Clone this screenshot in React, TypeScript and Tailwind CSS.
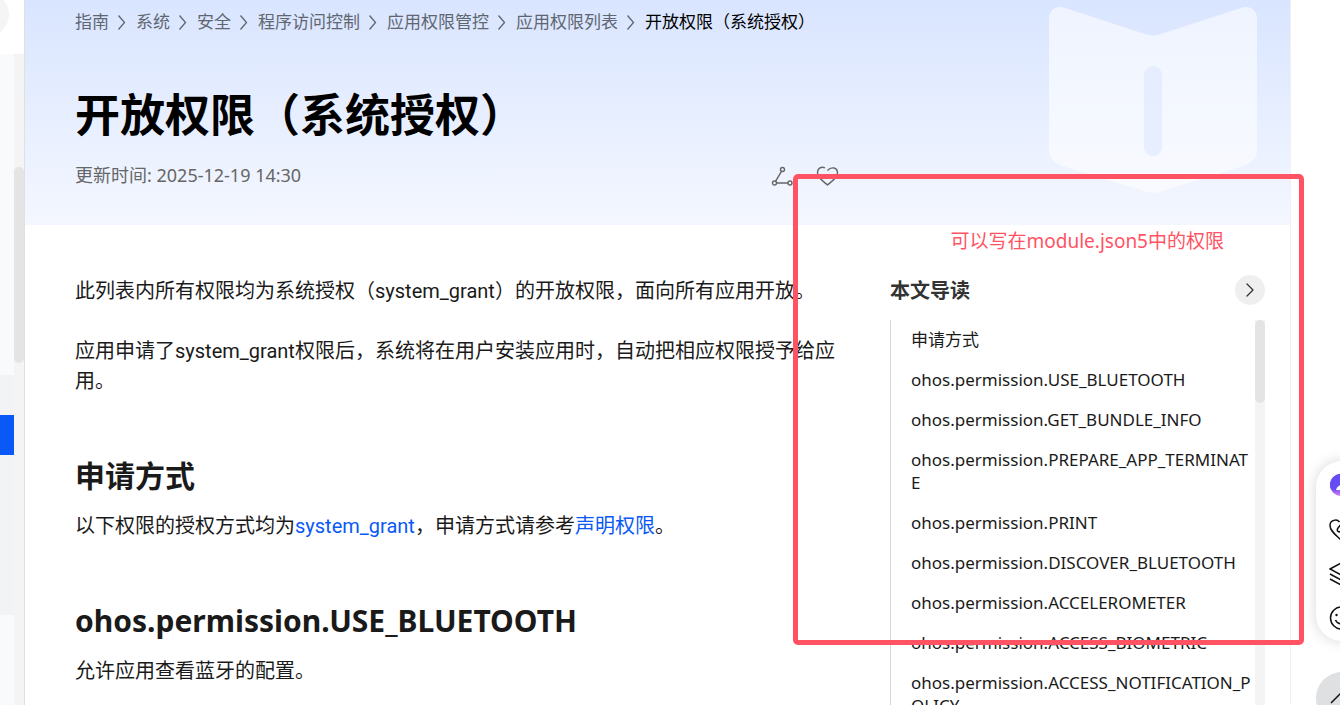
import { ChevronRight } from "lucide-react";

type Crumb = {
  label: string;
  current?: boolean;
};

const crumbs: Crumb[] = [
  { label: "指南" },
  { label: "系统" },
  { label: "安全" },
  { label: "程序访问控制" },
  { label: "应用权限管控" },
  { label: "应用权限列表" },
  { label: "开放权限（系统授权）", current: true },
];

const tocItems = [
  "申请方式",
  "ohos.permission.USE_BLUETOOTH",
  "ohos.permission.GET_BUNDLE_INFO",
  "ohos.permission.PREPARE_APP_TERMINATE",
  "ohos.permission.PRINT",
  "ohos.permission.DISCOVER_BLUETOOTH",
  "ohos.permission.ACCELEROMETER",
  "ohos.permission.ACCESS_BIOMETRIC",
  "ohos.permission.ACCESS_NOTIFICATION_POLICY",
];

const CrumbArrow = () => (
  <svg className="h-4 w-[27px] shrink-0" viewBox="0 0 27 16" fill="none" aria-hidden="true">
    <path d="M9.500 1.500l6 7-6 7" stroke="#5f6672" strokeWidth="1.3" />
  </svg>
);

const BookArt = () => (
  <svg
    className="absolute top-[7px] right-[33px] h-[186px] w-[208px]"
    viewBox="0 0 208 186"
    aria-hidden="true"
  >
    <path
      d="M0 11C0 3 8-2 16 1l80 26q8 3 16 0l80-26c8-3 16 2 16 10v133c0 7-6 12-13 15l-82 25q-9 4-18 0l-82-25C6 156 0 151 0 144Z"
      fill="#fff"
      fillOpacity="0.56"
    />
    <rect x="95" y="59" width="18" height="90" rx="9" fill="#dfe8ff" fillOpacity="0.65" />
  </svg>
);

const ShareIcon = () => (
  <svg className="size-6" viewBox="0 0 24 24" fill="none" stroke="#666" strokeWidth="1.4">
    <circle cx="11.5" cy="4.500" r="2" />
    <circle cx="3.500" cy="18" r="2" />
    <circle cx="19" cy="18" r="2" />
    <path d="M10.500 6.300l-6 10M5.500 18H17" />
  </svg>
);

const HeartIcon = () => (
  <svg className="size-6" viewBox="0 0 24 24" fill="none" stroke="#666" strokeWidth="1.4">
    <path d="M9 2.800C5.500 1.200 1.500 3 1.500 7.800c0 4.500 4.500 7.500 10 12.200 5.500-4.700 10-7.700 10-12.200 0-5.200-6-6.800-10-2.300" />
  </svg>
);

const Sidebar = () => (
  <aside className="relative flex w-[25px] shrink-0 flex-col overflow-hidden border-r border-[#e0e0e0] bg-white">
    <div className="h-[54px] shrink-0">
      <div className="absolute -top-2 -left-9 size-[45px] rounded-full bg-[#f5f5f5]" />
    </div>
    <div className="flex flex-1">
      <div className="flex w-[14px] flex-col bg-[#f8fafc]">
        <div className="mt-[321px] h-[240px] bg-[#f1f3f5] pt-10">
          <a href="#current" aria-label="应用权限列表" className="block h-10 bg-[#0a59f7]" />
        </div>
      </div>
      <div className="flex-1 bg-[#f4f4f4] pt-[113px]">
        <div className="h-[196px] rounded-full bg-[#e4e4e4]" />
      </div>
    </div>
  </aside>
);

const PageHeader = () => (
  <header className="relative h-[225px] bg-linear-to-b from-[#d9e5ff] to-[#f4f7ff] pr-[25px] pl-[50px]">
    <BookArt />
    <nav aria-label="breadcrumb" className="flex items-center pt-[10px] text-[17px] leading-6">
      {crumbs.map((crumb) =>
        crumb.current ? (
          <span key={crumb.label} className="whitespace-nowrap text-black">
            {crumb.label}
          </span>
        ) : (
          <span key={crumb.label} className="flex items-center">
            <a href="#crumb" className="whitespace-nowrap text-[#5f6672]">
              {crumb.label}
            </a>
            <CrumbArrow />
          </span>
        )
      )}
    </nav>
    <h1 className="mt-[51px] text-[45px] leading-[60px] font-bold text-black">
      开放权限（系统授权）
    </h1>
    <div className="mr-[425px] flex items-end justify-between pt-[18px]">
      <p className="pb-[2px] text-[18px] leading-6 text-[#666]">更新时间: 2025-12-19 14:30</p>
      <div className="flex gap-[21px]">
        <button type="button" aria-label="分享" className="size-6">
          <ShareIcon />
        </button>
        <button type="button" aria-label="收藏" className="size-6">
          <HeartIcon />
        </button>
      </div>
    </div>
  </header>
);

const Article = () => (
  <article className="min-w-0 flex-1 pt-[51px] text-[20px] leading-[30px] text-[#1a1a1a]">
    <div className="space-y-[30px] font-['Roboto','Noto_Sans_CJK_SC',sans-serif]">
      <p>此列表内所有权限均为系统授权（system_grant）的开放权限，面向所有应用开放。</p>
      <p>
        应用申请了system_grant权限后，系统将在用户安装应用时，自动把相应权限授予给应用。
      </p>
    </div>
    <section className="pt-[60px]">
      <h2 className="mb-[15px] text-[30px] leading-10 font-bold">申请方式</h2>
      <p className="font-['Roboto','Noto_Sans_CJK_SC',sans-serif]">
        以下权限的授权方式均为
        <a href="#system-grant" className="text-[#0a59f7]">
          system_grant
        </a>
        ，申请方式请参考
        <a href="#declare" className="text-[#0a59f7]">
          声明权限
        </a>
        。
      </p>
    </section>
    <section className="pt-[60px]">
      <h2 className="mb-[15px] text-[30px] leading-10 font-bold">
        ohos.permission.USE_BLUETOOTH
      </h2>
      <p>允许应用查看蓝牙的配置。</p>
    </section>
  </article>
);

const TableOfContents = () => (
  <aside className="w-[375px] shrink-0 pt-[50px]">
    <div className="flex items-center justify-between">
      <h3 className="pt-[2px] text-[20px] leading-7 font-bold text-[#333]">本文导读</h3>
      <button
        type="button"
        aria-label="收起"
        className="flex size-[30px] items-center justify-center rounded-full bg-[#efefef]"
      >
        <ChevronRight className="size-6 text-[#333]" strokeWidth={1.3} />
      </button>
    </div>
    <div className="mt-[15px] flex border-l border-[#d8d8d8]">
      <ul className="min-w-0 flex-1 pl-5">
        {tocItems.map((item) => (
          <li key={item} className="pt-2 pb-[9px] text-[17px] leading-[23px] break-all">
            <a href="#toc" className="text-[#1a1a1a]">
              {item}
            </a>
          </li>
        ))}
      </ul>
      <div className="w-[10px] bg-[#f4f4f4]">
        <div className="h-[83px] rounded-full bg-[#e4e4e4]" />
      </div>
    </div>
  </aside>
);

const FloatingTools = () => (
  <div className="absolute top-[461px] -right-[28px] flex w-[52px] flex-col gap-[31px]">
    <div className="flex h-[180px] flex-col items-center justify-between rounded-[26px] bg-white py-[11px] shadow-[0_0_14px_rgba(0,0,0,0.16)]">
      <button type="button" aria-label="智能助手" className="size-[26px]">
        <svg viewBox="0 0 26 26">
          <defs>
            <linearGradient id="assistant" x1="0" y1="0" x2="0" y2="1">
              <stop offset="0.6" stopColor="#6a4df5" />
              <stop offset="1" stopColor="#d07cf5" />
            </linearGradient>
          </defs>
          <circle cx="12" cy="13" r="11" fill="url(#assistant)" />
          <path d="M1.500 16a11 11 0 1 1 21 0c-5-2-9-2-12 0-3 4-6 3-9 0Z" fill="#644bf6" />
          <path d="M7 18c1-3 3-5 6-5l-2 5Z" fill="#fff" />
        </svg>
      </button>
      <button type="button" aria-label="评分" className="size-[26px]">
        <svg viewBox="0 0 26 26" fill="none" stroke="#111" strokeWidth="1.5">
          <path d="M13 25C7 19 1 15 1 9.500 1 4 8 2.500 10.500 6M13 25c6-6 12-10 12-15.500C25 3 17 2.500 13 7l-4 5c-2 3 1 5 3 3l3-3" />
        </svg>
      </button>
      <button type="button" aria-label="文档" className="size-[26px]">
        <svg viewBox="0 0 26 26" fill="none" stroke="#111" strokeWidth="1.5">
          <path d="M1 9l11-6 12 6-12 6ZM1 14l11 6 12-6M1 19l11 6 12-6" />
        </svg>
      </button>
      <button type="button" aria-label="反馈" className="size-[26px]">
        <svg viewBox="0 0 26 26" fill="none" stroke="#111" strokeWidth="1.5">
          <circle cx="12.500" cy="14" r="11" />
          <path d="M6.500 16c2 5 10 5 12 0" />
          <circle cx="7.500" cy="11" r="1.200" fill="#111" stroke="none" />
          <circle cx="17.500" cy="11" r="1.200" fill="#111" stroke="none" />
        </svg>
      </button>
    </div>
    <button
      type="button"
      aria-label="回到顶部"
      className="flex h-[52px] items-center justify-center rounded-full bg-[#dfe0e2]"
    >
      <svg className="size-6" viewBox="0 0 24 24" fill="none" stroke="#111" strokeWidth="1.5">
        <path d="M1 17L12 6l11 11" />
      </svg>
    </button>
  </div>
);

// Red highlight drawn over the table of contents
const Annotation = () => (
  <div className="pointer-events-none absolute top-[174px] right-[36px] h-[471px] w-[511px] rounded-[5px] border-5 border-[#ff5364]">
    <p className="absolute top-[48px] right-[75px] text-[19px] leading-7 whitespace-nowrap text-[#ff5364]">
      可以写在module.json5中的权限
    </p>
  </div>
);

export default function App() {
  return (
    <div className="relative flex h-screen overflow-hidden bg-white font-['Noto_Sans','Noto_Sans_CJK_SC',sans-serif]">
      <Sidebar />
      <main className="mr-[49px] min-w-0 flex-1 border-r border-[#f0f0f0]">
        <PageHeader />
        <div className="flex gap-[50px] pr-[25px] pl-[50px]">
          <Article />
          <TableOfContents />
        </div>
      </main>
      <FloatingTools />
      <Annotation />
    </div>
  );
}
